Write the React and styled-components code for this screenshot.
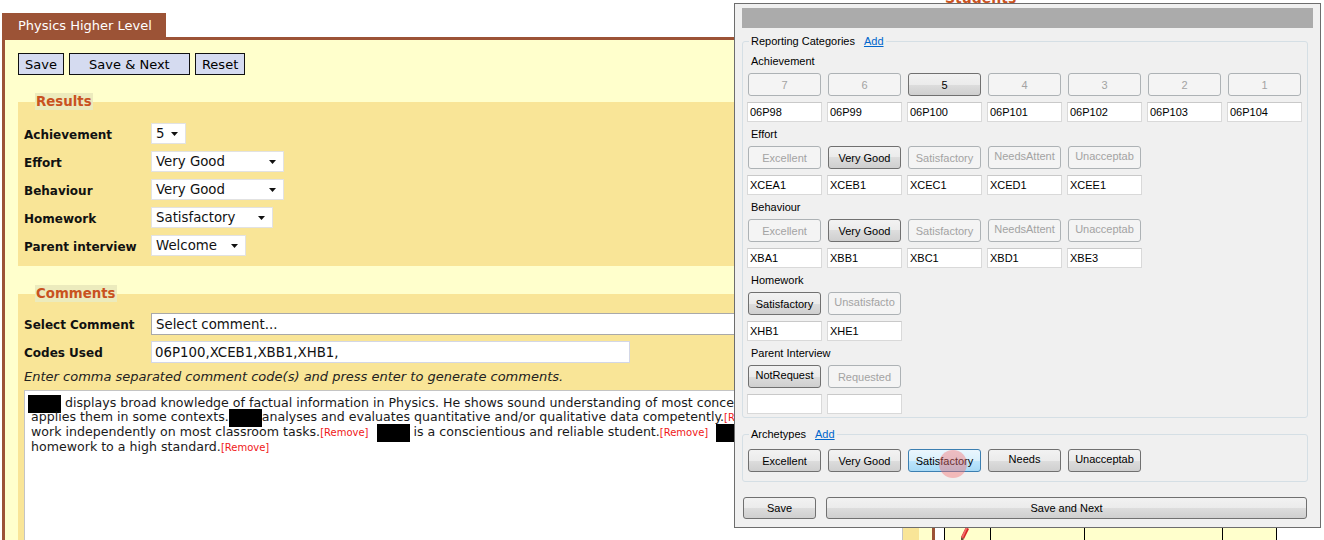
import styled, { createGlobalStyle } from "styled-components";

const brown = "#9c5336";
const legendOrange = "#c9521f";

const GlobalStyle = createGlobalStyle`
  html, body {
    margin: 0;
    padding: 0;
    background: #fff;
  }
  body {
    font-family: "DejaVu Sans", Verdana, sans-serif;
    color: #111;
    overflow: hidden;
  }
  * {
    box-sizing: border-box;
  }
`;

const Page = styled.div`
  position: relative;
  width: 1324px;
  height: 540px;
  display: flex;
  align-items: flex-start;
  padding: 13px 0 0 2px;
  overflow: hidden;
`;

/* ---------- report panel ---------- */

const Panel = styled.section`
  width: 933px;
  flex: none;
`;

const Tab = styled.div`
  display: inline-flex;
  align-items: center;
  height: 24px;
  padding: 0 14px 0 16px;
  background: ${brown};
  color: #fff;
  font-size: 13px;
`;

const PanelBody = styled.div`
  height: 520px;
  background: #ffffcc;
  border: 3px solid ${brown};
  border-bottom: none;
  padding: 13px 13px 0;
`;

const Toolbar = styled.div`
  display: flex;
  gap: 5px;
`;

const ActionButton = styled.button`
  height: 22px;
  width: ${(p) => (p.$w ? `${p.$w}px` : "auto")};
  padding: 0 6px;
  border: 1px solid #111;
  background: #d5dbf0;
  color: #000;
  font-family: "DejaVu Sans", Verdana, sans-serif;
  font-size: 13px;
`;

const Section = styled.fieldset`
  margin: ${(p) => p.$top}px 0 0;
  min-width: 0;
  border: none;
  background: #f9e597;
  padding: ${(p) => p.$pad};
`;

const SectionTitle = styled.legend`
  margin-left: 11px;
  padding: 0 1px;
  background: #ecebbd;
  color: ${legendOrange};
  font-size: 13.33px;
  font-weight: bold;
  line-height: 17px;
`;

const Rows = styled.div`
  display: flex;
  flex-direction: column;
  gap: ${(p) => p.$gap}px;
`;

const FormRow = styled.div`
  display: flex;
  align-items: center;
`;

const FieldLabel = styled.span`
  width: 127px;
  flex: none;
  padding-top: 2px;
  font-size: 12px;
  font-weight: bold;
  color: #111;
`;

const Dropdown = styled.div`
  display: flex;
  align-items: center;
  justify-content: space-between;
  width: ${(p) => p.$w}px;
  height: ${(p) => p.$h}px;
  padding: 0 7px 0 4px;
  background: #fff;
  border: 1px solid ${(p) => (p.$dark ? "#a9a9a9" : "#e2e2e2")};
  font-size: 13.33px;
  color: #111;
`;

const TextInput = styled.div`
  display: flex;
  align-items: center;
  width: ${(p) => p.$w}px;
  height: 22px;
  padding-left: 3px;
  background: #fff;
  border: 1px solid #d3d7e6;
  font-size: 13.33px;
  color: #111;
`;

const Hint = styled.div`
  margin-top: 7px;
  line-height: 14px;
  font-size: 13px;
  font-style: italic;
  color: #222;
`;

const CommentBox = styled.div`
  margin-top: 6px;
  width: 879px;
  height: 170px;
  background: #fff;
  border: 1px solid #c4c4c4;
  padding: 5px 6px;
  font-size: 12.6px;
  line-height: 14px;
  color: #1a1a1a;
  overflow: hidden;
`;

const CommentLine = styled.div`
  white-space: pre;
`;

const NameMask = styled.span`
  display: inline-block;
  width: 33px;
  height: 18px;
  margin: -3px 0 -3px ${(p) => (p.$lead ? "-3px" : "0")};
  vertical-align: middle;
  background: #000;
`;

const RemoveLink = styled.span`
  color: #f01818;
  font-size: 10px;
`;

/* ---------- students column ---------- */

const StudentsColumn = styled.aside`
  width: 333px;
  margin-left: 9px;
  flex: none;
`;

const ColumnHeading = styled.h2`
  margin: -23px 0 0 1px;
  font-size: 14px;
  line-height: 17px;
  color: ${legendOrange};
`;

const StudentTable = styled.table`
  margin-top: 7px;
  border-collapse: collapse;
  table-layout: fixed;
  width: 333px;
`;

const StudentCell = styled.td`
  height: 50px;
  padding: ${(p) => (p.$icon ? "12px 0 0 15px" : "0")};
  vertical-align: top;
  background: #ffffcc;
  border: 1px solid #000;
`;

/* ---------- comment builder window ---------- */

const Dialog = styled.div`
  position: absolute;
  left: 734px;
  top: 3px;
  width: 587px;
  height: 525px;
  padding: 4px 7px 0;
  background: #f0f0f0;
  border: 1px solid #6d6d6d;
  font-family: "Liberation Sans", Arial, sans-serif;
  font-size: 11px;
  color: #000;
`;

const TitleBar = styled.div`
  height: 20px;
  background: #ababab;
`;

const GroupBox = styled.fieldset`
  margin: ${(p) => p.$top}px 5px 0 0;
  min-width: 0;
  border: 1px solid #d5dfe5;
  border-radius: 3px;
  padding: ${(p) => p.$pad};
`;

const GroupTitle = styled.legend`
  margin-left: 2px;
  padding: 0 2px;
  line-height: 14px;
`;

const AddLink = styled.a`
  margin-left: 9px;
  color: #0066cc;
  text-decoration: underline;
`;

const CategoryList = styled.div`
  display: flex;
  flex-direction: column;
  gap: 5px;
`;

const CategoryName = styled.div`
  height: 14px;
  line-height: 14px;
  padding-left: 4px;
  margin-bottom: 5px;
`;

const SlotGrid = styled.div`
  display: grid;
  grid-template-columns: repeat(7, 75px);
  column-gap: 5px;
  margin-top: ${(p) => p.$top || 0}px;
`;

const buttonLooks = {
  on: `
    border-color: #707070;
    background: linear-gradient(#f2f2f2 0%, #ebebeb 50%, #dddddd 50%, #cfcfcf 100%);
    color: #000;
  `,
  off: `
    border-color: #adb2b5;
    background: #f4f4f4;
    color: #a3a3a3;
  `,
  hot: `
    border-color: #3c7fb1;
    background: linear-gradient(#eaf6fd 0%, #d9f0fc 50%, #bee6fd 50%, #a7d9f5 100%);
    color: #000;
  `,
};

const WinButton = styled.button`
  position: relative;
  display: flex;
  align-items: ${(p) => (p.$high ? "flex-start" : "center")};
  justify-content: center;
  flex: ${(p) => (p.$grow ? 1 : "none")};
  height: ${(p) => p.$h || 23}px;
  width: ${(p) => (p.$w ? `${p.$w}px` : "auto")};
  margin: 0 1px;
  padding: ${(p) => (p.$high ? "3px 0 0" : "0")};
  border: 1px solid;
  border-radius: 3px;
  font-family: "Liberation Sans", Arial, sans-serif;
  font-size: 11px;
  white-space: nowrap;
  ${(p) => buttonLooks[p.$look || "on"]}
`;

const ClickMark = styled.span`
  position: absolute;
  left: 30px;
  top: 0;
  width: 28px;
  height: 28px;
  border-radius: 50%;
  background: rgba(246, 110, 110, 0.42);
`;

const KeyBox = styled.div`
  height: 20px;
  padding-left: 2px;
  line-height: 18px;
  background: #fff;
  border: 1px solid #d9d9d9;
  border-top-color: #c9c9c9;
`;

const Footer = styled.div`
  display: flex;
  gap: 8px;
  margin: 15px 5px 0 0;
`;

const Caret = () => (
  <svg width="7" height="4" viewBox="0 0 7 4">
    <path d="M0 0h7L3.5 4z" fill="#111" />
  </svg>
);

const Pencil = () => (
  <svg width="9" height="16" viewBox="0 0 9 16">
    <path d="M6 0l3 2-5 10-3-2z" fill="#d62424" />
    <path d="M6 0l1.5 1L3 11 1.5 10z" fill="#f06a6a" />
    <path d="M1 10l3 2-3 3z" fill="#6b4b3a" />
  </svg>
);

const results = [
  { label: "Achievement", value: "5", w: 35 },
  { label: "Effort", value: "Very Good", w: 133 },
  { label: "Behaviour", value: "Very Good", w: 133 },
  { label: "Homework", value: "Satisfactory", w: 122 },
  { label: "Parent interview", value: "Welcome", w: 95 },
];

const categories = [
  {
    name: "Achievement",
    options: ["7", "6", "5", "4", "3", "2", "1"],
    picked: 2,
    codes: ["06P98", "06P99", "06P100", "06P101", "06P102", "06P103", "06P104"],
  },
  {
    name: "Effort",
    options: ["Excellent", "Very Good", "Satisfactory", "NeedsAttent", "Unacceptab"],
    picked: 1,
    codes: ["XCEA1", "XCEB1", "XCEC1", "XCED1", "XCEE1"],
  },
  {
    name: "Behaviour",
    options: ["Excellent", "Very Good", "Satisfactory", "NeedsAttent", "Unacceptab"],
    picked: 1,
    codes: ["XBA1", "XBB1", "XBC1", "XBD1", "XBE3"],
  },
  {
    name: "Homework",
    options: ["Satisfactory", "Unsatisfacto"],
    picked: 0,
    codes: ["XHB1", "XHE1"],
  },
  {
    name: "Parent Interview",
    options: ["NotRequest", "Requested"],
    picked: 0,
    codes: ["", ""],
  },
];

// captions that were cut off by the button width sit higher up
const clipped = ["NeedsAttent", "Unacceptab", "Unsatisfacto", "NotRequest", "Needs"];

const archetypes = ["Excellent", "Very Good", "Satisfactory", "Needs", "Unacceptab"];

function ReportPanel() {
  return (
    <Panel>
      <Tab>Physics Higher Level</Tab>
      <PanelBody>
        <Toolbar>
          <ActionButton>Save</ActionButton>
          <ActionButton $w={121}>Save &amp; Next</ActionButton>
          <ActionButton>Reset</ActionButton>
        </Toolbar>

        <Section $top={18} $pad="13px 16px 10px 6px">
          <SectionTitle>Results</SectionTitle>
          <Rows $gap={7}>
            {results.map((r) => (
              <FormRow key={r.label}>
                <FieldLabel>{r.label}</FieldLabel>
                <Dropdown $w={r.w} $h={21}>
                  {r.value}
                  <Caret />
                </Dropdown>
              </FormRow>
            ))}
          </Rows>
        </Section>

        <Section $top={19} $pad="11px 16px 10px 6px">
          <SectionTitle>Comments</SectionTitle>
          <Rows $gap={6}>
            <FormRow>
              <FieldLabel>Select Comment</FieldLabel>
              <Dropdown $w={740} $h={22} $dark>
                Select comment...
                <Caret />
              </Dropdown>
            </FormRow>
            <FormRow>
              <FieldLabel>Codes Used</FieldLabel>
              <TextInput $w={479}>06P100,XCEB1,XBB1,XHB1,</TextInput>
            </FormRow>
          </Rows>
          <Hint>Enter comma separated comment code(s) and press enter to generate comments.</Hint>
          <CommentBox>
            <CommentLine>
              <NameMask $lead />
              {" displays broad knowledge of factual information in Physics. He shows sound understanding of most concepts and"}
            </CommentLine>
            <CommentLine>
              {"applies them in some contexts."}
              <NameMask />
              {"analyses and evaluates quantitative and/or qualitative data competently."}
              <RemoveLink>[Remove]</RemoveLink>
              {"  "}
              <NameMask />
              {" is able to"}
            </CommentLine>
            <CommentLine>
              {"work independently on most classroom tasks."}
              <RemoveLink>[Remove]</RemoveLink>
              {"  "}
              <NameMask />
              {" is a conscientious and reliable student."}
              <RemoveLink>[Remove]</RemoveLink>
              {"  "}
              <NameMask />
              {" completes"}
            </CommentLine>
            <CommentLine>
              {"homework to a high standard."}
              <RemoveLink>[Remove]</RemoveLink>
            </CommentLine>
          </CommentBox>
        </Section>
      </PanelBody>
    </Panel>
  );
}

function StudentsList() {
  const rows = Array.from({ length: 11 }, (_, i) => i);
  return (
    <StudentsColumn>
      <ColumnHeading>Students</ColumnHeading>
      <StudentTable>
        <colgroup>
          <col style={{ width: 46 }} />
          <col style={{ width: 94 }} />
          <col style={{ width: 138 }} />
          <col style={{ width: 54 }} />
        </colgroup>
        <tbody>
          {rows.map((i) => (
            <tr key={i}>
              <StudentCell $icon>
                <Pencil />
              </StudentCell>
              <StudentCell />
              <StudentCell />
              <StudentCell />
            </tr>
          ))}
        </tbody>
      </StudentTable>
    </StudentsColumn>
  );
}

function CommentBuilder() {
  return (
    <Dialog>
      <TitleBar />

      <GroupBox $top={6} $pad="6px 0 3px 4px">
        <GroupTitle>
          Reporting Categories
          <AddLink>Add</AddLink>
        </GroupTitle>
        <CategoryList>
          {categories.map((c) => (
            <div key={c.name}>
              <CategoryName>{c.name}</CategoryName>
              <SlotGrid>
                {c.options.map((o, i) => (
                  <WinButton
                    key={o}
                    $look={i === c.picked ? "on" : "off"}
                    $high={clipped.includes(o)}
                  >
                    {o}
                  </WinButton>
                ))}
              </SlotGrid>
              <SlotGrid $top={6}>
                {c.codes.map((code, i) => (
                  <KeyBox key={i}>{code}</KeyBox>
                ))}
              </SlotGrid>
            </div>
          ))}
        </CategoryList>
      </GroupBox>

      <GroupBox $top={9} $pad="8px 0 9px 4px">
        <GroupTitle>
          Archetypes
          <AddLink>Add</AddLink>
        </GroupTitle>
        <SlotGrid>
          {archetypes.map((a) => (
            <WinButton
              key={a}
              $look={a === "Satisfactory" ? "hot" : "on"}
              $high={clipped.includes(a)}
            >
              {a}
              {a === "Satisfactory" && <ClickMark />}
            </WinButton>
          ))}
        </SlotGrid>
      </GroupBox>

      <Footer>
        <WinButton $w={73} $h={22}>Save</WinButton>
        <WinButton $h={22} $grow>Save and Next</WinButton>
      </Footer>
    </Dialog>
  );
}

export default function App() {
  return (
    <>
      <GlobalStyle />
      <Page>
        <ReportPanel />
        <StudentsList />
        <CommentBuilder />
      </Page>
    </>
  );
}
